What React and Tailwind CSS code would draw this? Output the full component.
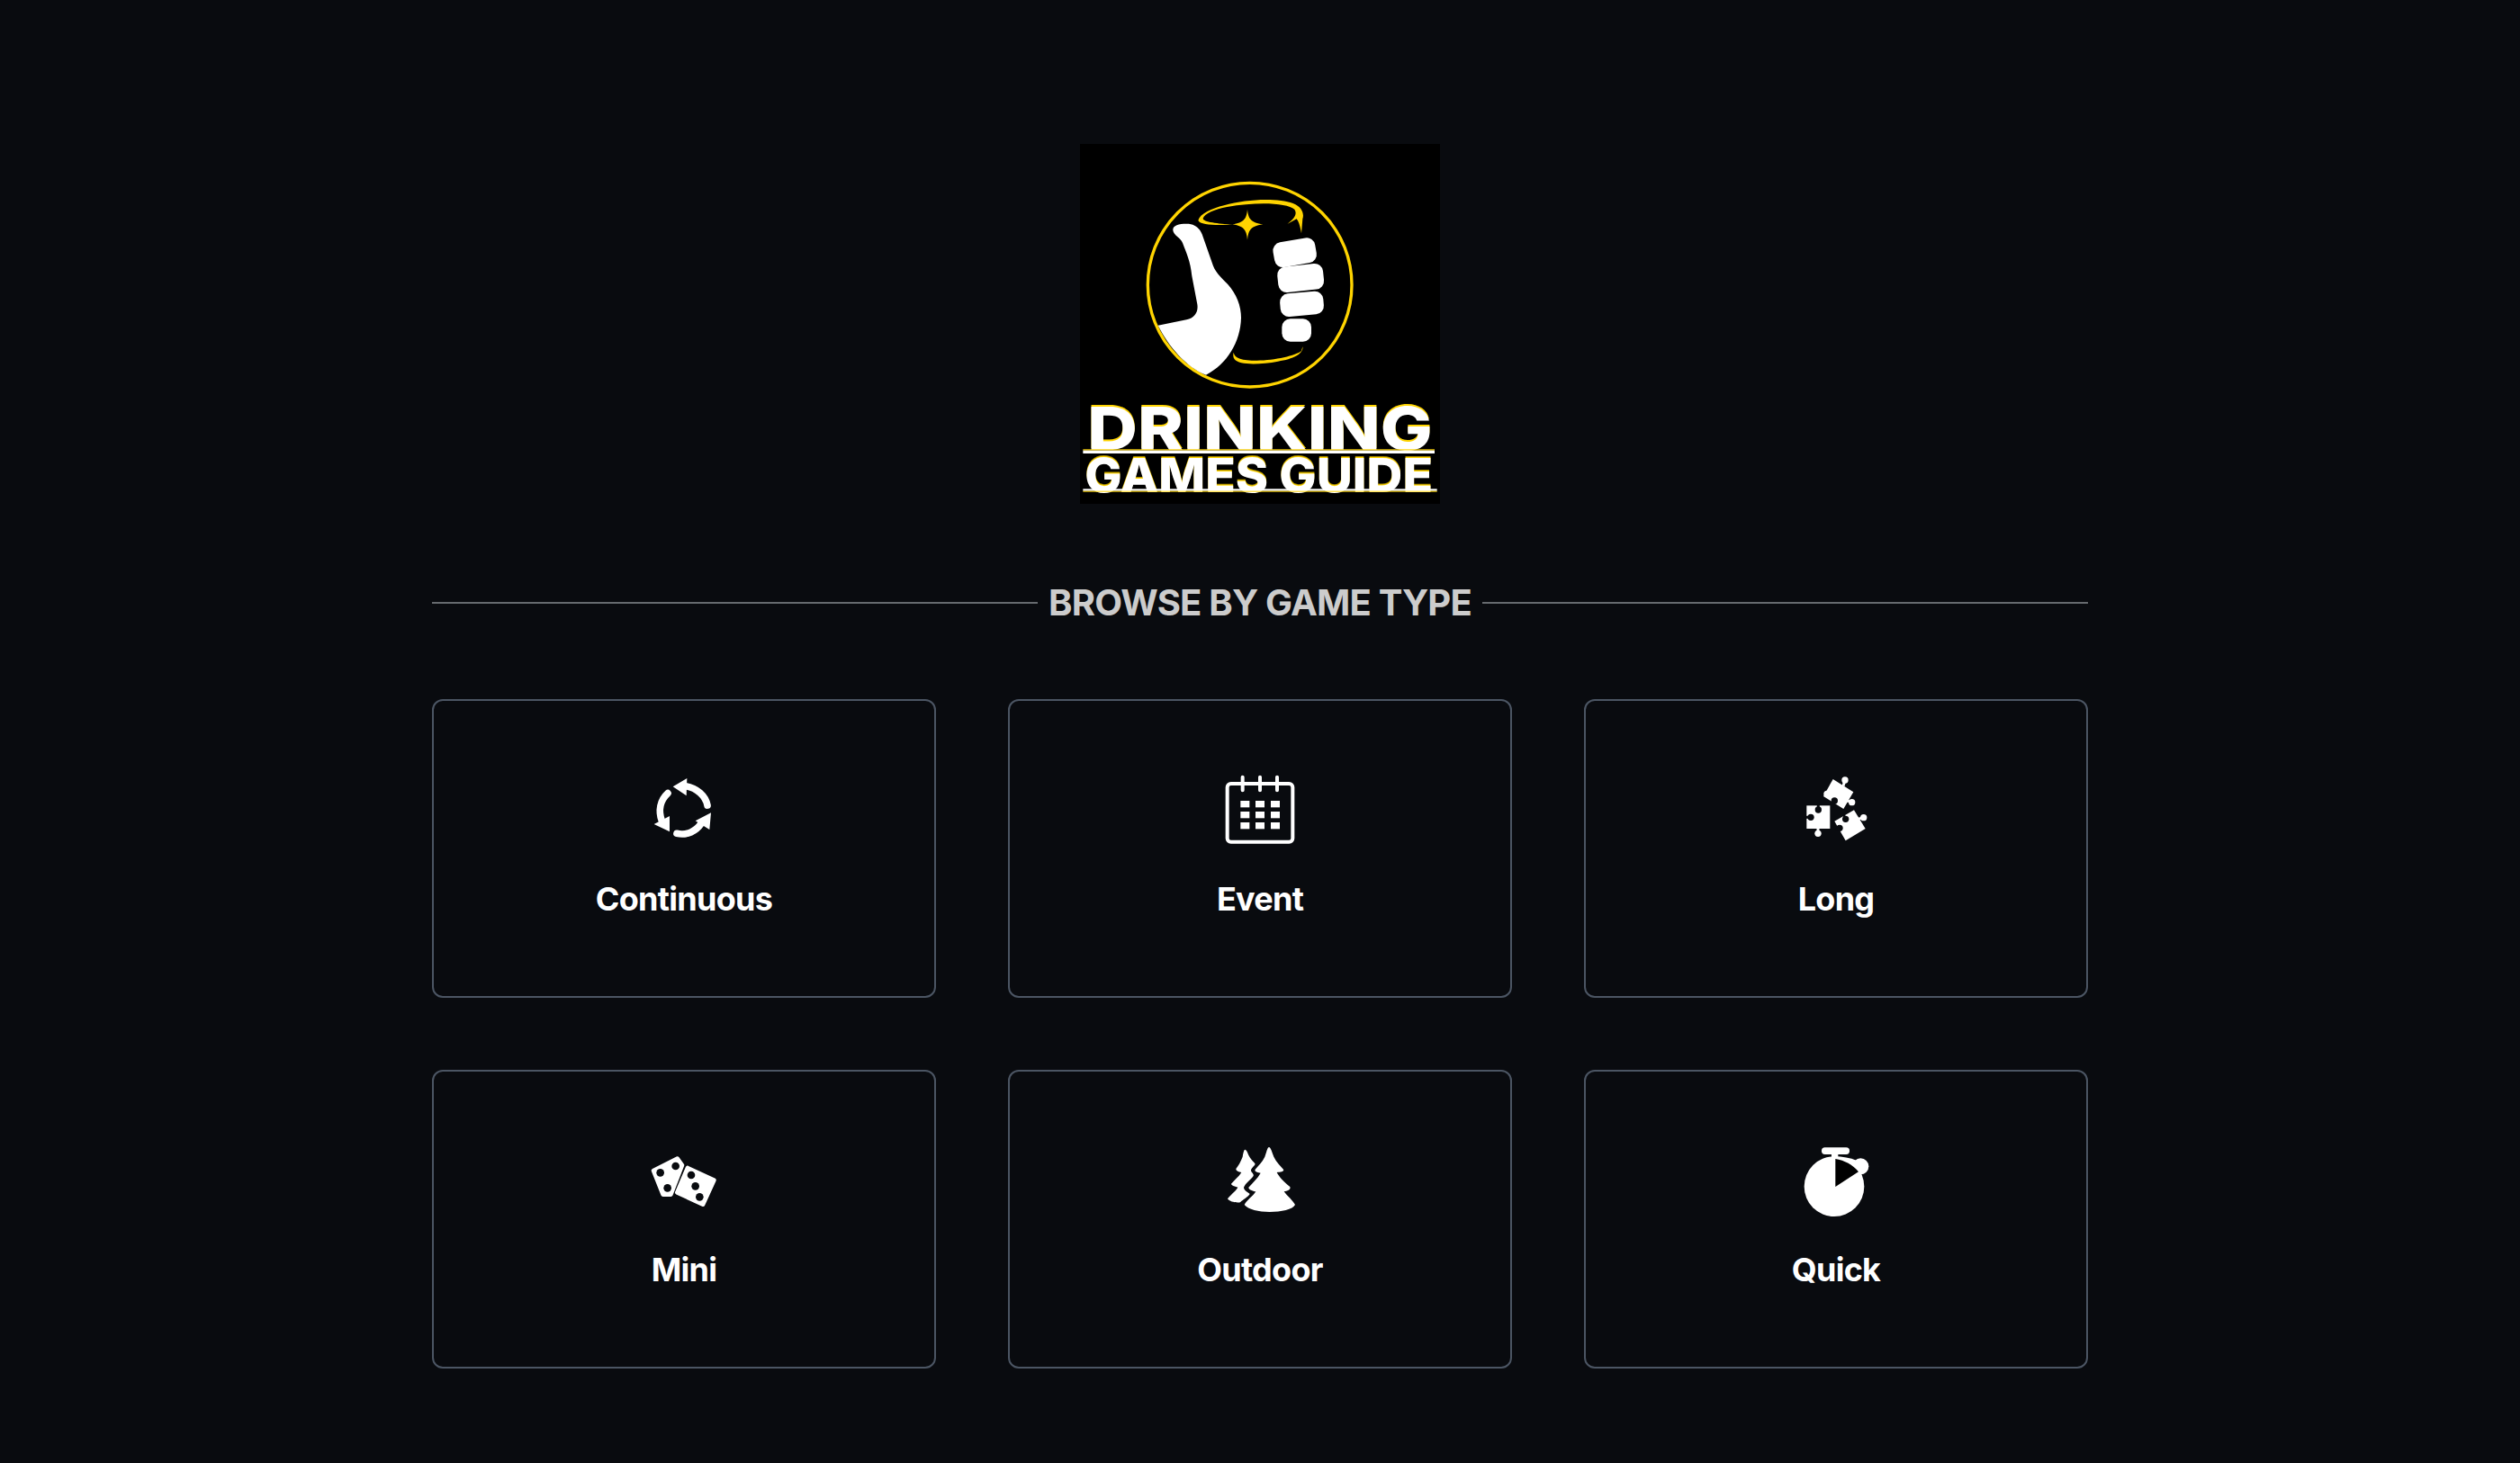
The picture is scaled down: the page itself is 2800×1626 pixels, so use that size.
const BG = "#090b0f";

function Logo() {
  const gold = "#ffd400";
  return (
    <svg viewBox="30 30 1200 1200" className="block w-[400px] h-[400px] bg-black">
      <circle cx="596" cy="500" r="340" fill="none" stroke={gold} strokeWidth="10" />
      {/* thumb */}
      <path
        fill="#fff"
        d="M340 318 C338 302 358 296 385 296 C415 296 432 312 440 340 L470 425 C478 455 500 475 522 497 C552 530 567 570 567 610 C565 690 520 765 450 800 C385 775 325 705 290 635 L385 616 C412 610 425 590 421 565 L403 470 C398 420 385 395 372 360 C366 343 342 335 340 318 Z"
      />
      {/* fingers */}
      <rect x="675" y="350" width="142" height="84" rx="28" fill="#fff" transform="rotate(-10 746 392)" />
      <rect x="689" y="434" width="153" height="86" rx="28" fill="#fff" transform="rotate(-6 765 477)" />
      <rect x="697" y="525" width="145" height="77" rx="28" fill="#fff" transform="rotate(-5 770 563)" />
      <rect x="703" y="613" width="98" height="76" rx="28" fill="#fff" />
      {/* sparkle and swooshes */}
      <path fill={gold} d="M588 248 C591 280 600 292 640 298 C600 304 591 316 588 350 C585 316 576 304 538 298 C576 292 585 280 588 248 Z" />
      <path
        fill={gold}
        d="M424 285 C430 262 470 245 510 235 C590 212 690 210 740 228 C770 240 778 262 772 280 L768 328 C764 305 760 290 752 280 L722 296 C745 280 755 262 745 248 C720 226 620 222 520 240 C480 248 445 262 440 278 C440 290 490 296 540 298 C500 302 430 302 424 285 Z"
      />
      <path
        fill={gold}
        d="M542 725 C545 745 570 752 620 752 C680 752 750 735 768 720 L772 706 C776 730 740 748 690 755 C630 766 560 768 545 748 C540 740 540 732 542 725 Z"
      />
      {/* wordmark */}
      <g fontFamily="Inter, sans-serif" fontWeight="800">
        <text x="55" y="1051" fontSize="196" textLength="1150" lengthAdjust="spacingAndGlyphs" fill="#fff" className="[filter:drop-shadow(0_-6px_0_#ffd400)]">DRINKING</text>
        <rect x="40" y="1048" width="1172" height="4" fill={gold} />
        <rect x="40" y="1052" width="1172" height="10" fill="#fff" />
        <text x="46" y="1190" fontSize="155" textLength="1160" lengthAdjust="spacingAndGlyphs" fill="#fff" className="[filter:drop-shadow(0_-5px_0_#ffd400)]">GAMES GUIDE</text>
        <rect x="40" y="1180" width="1180" height="7" fill="#fff" />
        <rect x="40" y="1187" width="1180" height="3" fill={gold} />
      </g>
    </svg>
  );
}

function IconContinuous() {
  return (
    <svg viewBox="0 0 360 360" className="block w-[120px] h-[120px]">
      <g fill="none" stroke="#fff" strokeWidth="23" strokeLinecap="round">
        <path d="M258 162 C252 130 222 104 186 98" />
        <path d="M126 122 C100 146 94 180 106 214" />
        <path d="M156 256 C190 264 220 248 238 222" />
      </g>
      <path fill="#fff" d="M143 100 L190 72 L188 130 Z M80 225 L132 198 L132 250 Z M270 187 L218 214 L265 243 Z" />
    </svg>
  );
}

function IconEvent() {
  return (
    <svg viewBox="0 0 360 360" className="block w-[120px] h-[120px]">
      <rect x="71" y="90" width="218" height="194" rx="12" fill="none" stroke="#fff" strokeWidth="12" />
      <g stroke="#fff" strokeWidth="12" strokeLinecap="round">
        <path d="M122 68 V112 M180 68 V112 M237 68 V112" />
      </g>
      <g fill="#fff">
        {[115, 165, 216].map((x) =>
          [147, 183, 219].map((y) => <rect key={x + "-" + y} x={x} y={y} width="30" height="22" />)
        )}
      </g>
    </svg>
  );
}

function IconLong() {
  return (
    <svg viewBox="0 0 360 360" className="block w-[120px] h-[120px]">
      {/* top piece */}
      <path fill="#fff" d="M170 75 L238 118 L205 174 L138 132 Z" />
      <circle cx="210" cy="78" r="11" fill="#fff" />
      <path stroke="#fff" strokeWidth="9" d="M210 78 L204 98" />
      <circle cx="233" cy="152" r="11" fill="#fff" />
      <path stroke="#fff" strokeWidth="9" d="M233 152 L214 146" />
      <circle cx="150" cy="124" r="11" fill="#fff" />
      <circle cx="175" cy="147" r="11" fill={BG} />
      <path stroke={BG} strokeWidth="7" d="M168 160 L172 170" />
      {/* left piece */}
      <rect x="82" y="163" width="78" height="77" fill="#fff" />
      <circle cx="120" cy="256" r="11" fill="#fff" />
      <path stroke="#fff" strokeWidth="9" d="M120 238 V256" />
      <circle cx="121" cy="177" r="11" fill={BG} />
      <path stroke={BG} strokeWidth="9" d="M121 160 V175" />
      <circle cx="96" cy="202" r="11" fill={BG} />
      <path stroke={BG} strokeWidth="9" d="M80 202 H95" />
      {/* right piece */}
      <path fill="#fff" d="M175 215 L240 178 L278 240 L212 280 Z" />
      <circle cx="272" cy="203" r="11" fill="#fff" />
      <path stroke="#fff" strokeWidth="9" d="M272 203 L252 208" />
      <circle cx="212" cy="208" r="11" fill={BG} />
      <path stroke={BG} strokeWidth="8" d="M205 192 L211 206" />
      <circle cx="192" cy="238" r="11" fill={BG} />
      <path stroke={BG} strokeWidth="8" d="M178 244 L190 238" />
    </svg>
  );
}

function IconMini() {
  return (
    <svg viewBox="0 6 360 360" className="block w-[120px] h-[120px]">
      <g fill="#fff" stroke="#fff" strokeWidth="14" strokeLinejoin="round">
        <path d="M78 150 L158 110 L174 132 L136 230 L110 230 Z" />
        <path d="M192 141 L280 182 L243 263 L157 223 Z" />
      </g>
      <g fill={BG}>
        <circle cx="101" cy="157" r="13" />
        <circle cx="152" cy="135" r="13" />
        <circle cx="125" cy="208" r="13" />
        <circle cx="204" cy="165" r="13" />
        <circle cx="218" cy="202" r="13" />
        <circle cx="232" cy="238" r="13" />
      </g>
    </svg>
  );
}

function IconOutdoor() {
  return (
    <svg viewBox="0 6 360 360" className="block w-[120px] h-[120px]">
      <path
        fill="#fff"
        d="M210 72 C216 72 220 90 226 104 C234 122 250 136 258 146 C262 154 246 154 236 156 C244 172 262 190 280 204 C284 214 270 218 260 220 C272 236 290 250 297 264 C290 280 250 288 212 288 C176 288 140 280 128 264 C134 250 156 236 166 220 C156 218 142 214 142 206 C154 192 172 176 182 158 C174 156 160 154 164 146 C172 136 188 122 196 104 C202 90 204 72 210 72 Z"
      />
      <path
        fill="#fff"
        d="M130 80 C136 80 140 96 146 106 C152 116 160 122 164 128 C160 136 150 142 150 150 C152 158 160 160 158 168 C148 182 132 192 126 206 C126 216 140 222 146 228 C140 238 124 246 114 256 C100 258 78 254 72 244 C80 232 98 220 106 206 C98 202 86 202 84 194 C94 182 110 170 118 156 C110 154 100 152 100 144 C108 134 116 120 122 104 C124 94 126 80 130 80 Z"
      />
    </svg>
  );
}

function IconQuick() {
  return (
    <svg viewBox="0 6 360 360" className="block w-[120px] h-[120px]">
      <rect x="132" y="73" width="93" height="23" rx="11" fill="#fff" />
      <rect x="165" y="90" width="22" height="20" fill="#fff" />
      <circle cx="262" cy="136" r="27" fill="#fff" />
      <circle cx="174" cy="203" r="100" fill="#fff" />
      <path fill="#fff" d="M174 103 C202 103 228 108 248 116 L272 146 L257 171 L178 204 Z" />
      <path fill="#000" d="M178 111 L178 204 L255 154 C236 130 208 116 178 111 Z" />
    </svg>
  );
}

const gameTypes = [
  { name: "Continuous", Icon: IconContinuous },
  { name: "Event", Icon: IconEvent },
  { name: "Long", Icon: IconLong },
  { name: "Mini", Icon: IconMini },
  { name: "Outdoor", Icon: IconOutdoor },
  { name: "Quick", Icon: IconQuick },
];

export default function App() {
  return (
    <div className="min-h-screen bg-[#090b0f] font-['Inter',sans-serif] flex flex-col items-center pt-[160px] pb-[105px]">
      <Logo />

      {/* Section heading */}
      <div className="w-[1840px] flex items-center gap-3 mt-[86px] mb-[83px]">
        <div className="flex-1 h-0.5 bg-[#666a6e]" />
        <h2 className="text-[40px] leading-[48px] font-bold tracking-[-0.02em] text-[#cccccc]">BROWSE BY GAME TYPE</h2>
        <div className="flex-1 h-0.5 bg-[#666a6e]" />
      </div>

      {/* Game types */}
      <div className="w-[1840px] grid grid-cols-3 gap-20">
        {gameTypes.map(({ name, Icon }) => (
          <div
            key={name}
            className="h-[332px] border-2 border-[#4b5563] rounded-xl flex flex-col items-center pt-[62px]"
          >
            <Icon />
            <p className="mt-[18px] text-[36px] leading-[40px] font-bold tracking-[-0.02em] text-white">{name}</p>
          </div>
        ))}
      </div>
    </div>
  );
}
